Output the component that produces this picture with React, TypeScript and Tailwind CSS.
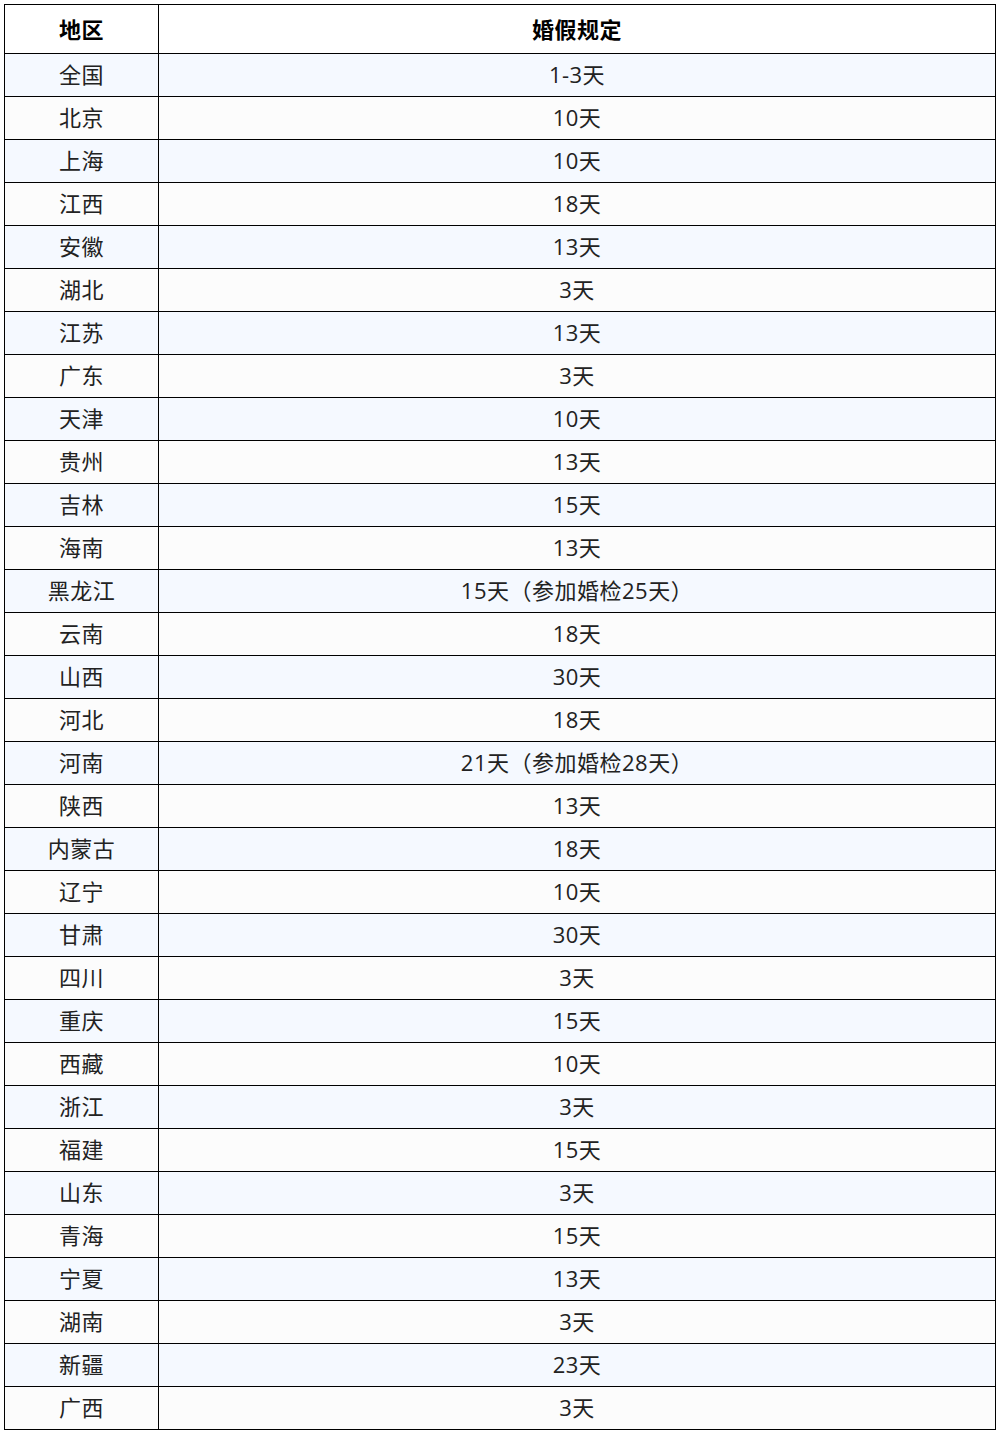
const rows: [string, string][] = [
  ["全国", "1-3天"],
  ["北京", "10天"],
  ["上海", "10天"],
  ["江西", "18天"],
  ["安徽", "13天"],
  ["湖北", "3天"],
  ["江苏", "13天"],
  ["广东", "3天"],
  ["天津", "10天"],
  ["贵州", "13天"],
  ["吉林", "15天"],
  ["海南", "13天"],
  ["黑龙江", "15天（参加婚检25天）"],
  ["云南", "18天"],
  ["山西", "30天"],
  ["河北", "18天"],
  ["河南", "21天（参加婚检28天）"],
  ["陕西", "13天"],
  ["内蒙古", "18天"],
  ["辽宁", "10天"],
  ["甘肃", "30天"],
  ["四川", "3天"],
  ["重庆", "15天"],
  ["西藏", "10天"],
  ["浙江", "3天"],
  ["福建", "15天"],
  ["山东", "3天"],
  ["青海", "15天"],
  ["宁夏", "13天"],
  ["湖南", "3天"],
  ["新疆", "23天"],
  ["广西", "3天"],
];

const App = () => {
  return (
    <div className="min-h-screen bg-white pt-1 pl-1 font-['Open_Sans','Noto_Sans_CJK_SC',sans-serif] text-[22px] tracking-[0.5px] text-[#222]">
      <div className="w-[992px] border-l border-t border-black">
        {/* Header */}
        <div className="grid grid-cols-[154px_1fr] bg-white font-bold text-black">
          <div className="flex h-[49px] items-center justify-center border-b border-r border-black">
            地区
          </div>
          <div className="flex h-[49px] items-center justify-center border-b border-r border-black">
            婚假规定
          </div>
        </div>

        {rows.map(([region, days], i) => (
          <div
            key={region}
            className={`grid grid-cols-[154px_1fr] ${
              i % 2 === 0 ? "bg-[#f5f9ff]" : "bg-[#fcfcfc]"
            }`}
          >
            <div className="flex h-[43px] items-center justify-center border-b border-r border-black pb-[2px]">
              {region}
            </div>
            <div className="flex h-[43px] items-center justify-center border-b border-r border-black pb-[2px]">
              {days}
            </div>
          </div>
        ))}
      </div>
    </div>
  );
};

export default App;
